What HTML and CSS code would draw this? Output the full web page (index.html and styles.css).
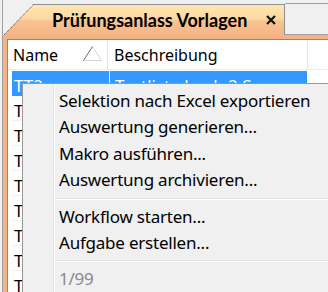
FILE: index.html
```html
<!DOCTYPE html>
<html lang="de">
<head>
    <meta charset="UTF-8">
    <title>Prüfungsanlass Vorlagen</title>
    <link rel="stylesheet" href="styles.css">
</head>
<body>

<div class="window">
    <div class="tabbar">
        <svg class="tab-corner" width="30" height="31" viewBox="0 0 30 31">
            <defs>
                <linearGradient id="tabGrad" x1="0" y1="0" x2="0" y2="1">
                    <stop offset="0" stop-color="#ffe6b1"/>
                    <stop offset="0.45" stop-color="#fdd9a3"/>
                    <stop offset="0.55" stop-color="#f9c292"/>
                    <stop offset="1" stop-color="#f6b586"/>
                </linearGradient>
            </defs>
            <polygon points="0,31 30,0 30,31" fill="url(#tabGrad)"/>
            <line x1="0" y1="31" x2="30" y2="0" stroke="#3c3c3c" stroke-width="1" stroke-dasharray="1 1"/>
        </svg>
        <div class="tab">
            <span class="tab-title">Prüfungsanlass Vorlagen</span>
            <svg class="tab-close" width="10" height="10" viewBox="0 0 10 10">
                <path d="M1 1 L9 9 M9 1 L1 9" stroke="#111" stroke-width="2.2"/>
            </svg>
        </div>
        <div class="tab-rest"></div>
    </div>

    <div class="panel">
        <div class="list">
            <div class="list-head">
                <div class="col col-name">
                    <span>Name</span>
                    <svg class="sort-icon" width="19" height="15" viewBox="0 0 19 15">
                        <path d="M9.5 0.5 L18.5 14.5 L0.5 14.5" fill="none" stroke="#d4d4d4" stroke-width="1"/>
                        <path d="M9.5 0.5 L0.5 14.5" fill="none" stroke="#6a6a6a" stroke-width="1"/>
                    </svg>
                </div>
                <div class="col col-desc">Beschreibung</div>
                <div class="col col-rest"></div>
            </div>
            <div class="rows">
                <div class="row selected"><div class="cell cell-name">TT2</div><div class="cell cell-desc">Testliste hoch 2 Sa</div></div>
                <div class="row"><div class="cell cell-name">TT3</div><div class="cell cell-desc">Testliste 3</div></div>
                <div class="row"><div class="cell cell-name">TT4</div><div class="cell cell-desc">Testliste 4</div></div>
                <div class="row"><div class="cell cell-name">TT5</div><div class="cell cell-desc">Testliste 5</div></div>
                <div class="row"><div class="cell cell-name">TT6</div><div class="cell cell-desc">Testliste 6</div></div>
                <div class="row"><div class="cell cell-name">TT7</div><div class="cell cell-desc">Testliste 7</div></div>
                <div class="row"><div class="cell cell-name">TT8</div><div class="cell cell-desc">Testliste 8</div></div>
                <div class="row"><div class="cell cell-name">TT9</div><div class="cell cell-desc">Testliste 9</div></div>
                <div class="row"><div class="cell cell-name">TT10</div><div class="cell cell-desc">Testliste 10</div></div>
            </div>
        </div>
    </div>

    <!-- context menu -->
    <div class="menu">
        <div class="menu-item">Selektion nach Excel exportieren</div>
        <div class="menu-item">Auswertung generieren...</div>
        <div class="menu-item">Makro ausführen...</div>
        <div class="menu-item">Auswertung archivieren...</div>
        <div class="menu-sep"></div>
        <div class="menu-item">Workflow starten...</div>
        <div class="menu-item">Aufgabe erstellen...</div>
        <div class="menu-sep"></div>
        <div class="menu-item disabled">1/99</div>
    </div>
</div>

</body>
</html>
```

FILE: styles.css
```css
body {
    margin: 0;
    padding: 0;
    background-color: #f0f0f0;
    font-family: 'Noto Sans', 'Open Sans', sans-serif;
    font-size: 16px;
    color: #000;
    overflow: hidden;
}

.window {
    position: relative;
    width: 420px;
    height: 292px;
    margin-left: 2px;
    border-left: 1px solid #a0a0a0;
}

/* Tab strip */
.tabbar {
    display: flex;
    align-items: flex-end;
    height: 35px;
    padding-left: 1px;
}

.tab-corner {
    display: block;
    flex: none;
}

.tab {
    display: flex;
    align-items: center;
    justify-content: space-between;
    box-sizing: border-box;
    width: 251px;
    height: 31px;
    padding: 0 8px 0 18px;
    border-top: 1px solid #8c8e94;
    border-right: 1px solid #8c8e94;
    background: linear-gradient(#ffe6b1 0%, #fdd9a3 45%, #f9c292 55%, #f6b586 100%);
}

.tab-title {
    font-family: 'Lato', 'Noto Sans', sans-serif;
    font-weight: 700;
    font-size: 18px;
    white-space: nowrap;
}

.tab-close {
    flex: none;
}

.tab-rest {
    flex: 1;
    box-sizing: border-box;
    height: 32px;
    border-top: 1px solid #a0a0a0;
    border-bottom: 1px solid #a0a0a0;
}

/* Orange frame around the list */
.panel {
    background-color: #f5b383;
    padding: 4px 0 0 4px;
    height: 300px;
}

.list {
    background-color: white;
    border: 1px solid #828790;
    height: 100%;
}

.list-head {
    display: flex;
    height: 29px;
    border-bottom: 1px solid #ececec;
}

.col {
    display: flex;
    align-items: center;
    box-sizing: border-box;
    border-right: 1px solid #e5e5e5;
}

.col-name {
    width: 100px;
    padding-left: 5px;
    justify-content: space-between;
    padding-right: 5px;
}

.sort-icon {
    margin-top: -2px;
}

.col-desc {
    width: 200px;
    padding-left: 6px;
}

.col-rest {
    flex: 1;
    border-right: none;
}

.rows {
    padding: 1px 0 0 4px;
}

.row {
    display: flex;
    width: 295px;
    height: 25px;
    box-sizing: border-box;
    border-bottom: 1px solid #f0f0f0;
}

.cell {
    padding: 5px 0 0 2px;
    font-size: 17px;
    line-height: 20px;
    overflow: hidden;
    white-space: nowrap;
}

.cell-name {
    width: 95px;
}

.cell-desc {
    flex: 1;
    padding-left: 5px;
    border-left: 1px solid transparent;
}

.row.selected {
    background-color: #3399ff;
    color: white;
    border-bottom-color: #3399ff;
}

.row.selected .cell-desc {
    border-left-color: #e8f2ff;
}

/* Context menu */
.menu {
    position: absolute;
    left: 19px;
    top: 83px;
    width: 400px;
    padding: 4px 2px;
    border: 1px solid #979797;
    background: linear-gradient(to right, #f0f0f0 30px, #e2e3e3 30px, #e2e3e3 31px, #ffffff 31px, #ffffff 32px, #f0f0f0 32px);
}

.menu-item {
    height: 26.4px;
    line-height: 26px;
    padding-left: 34px;
    font-size: 17px;
    letter-spacing: -0.22px;
    white-space: nowrap;
}

.menu-item.disabled {
    color: #8a8a8a;
}

.menu-sep {
    height: 10px;
    margin-left: 32px;
    background: linear-gradient(#f0f0f0 4px, #e0e0e0 4px, #e0e0e0 5px, #ffffff 5px, #ffffff 6px, #f0f0f0 6px);
}
```
